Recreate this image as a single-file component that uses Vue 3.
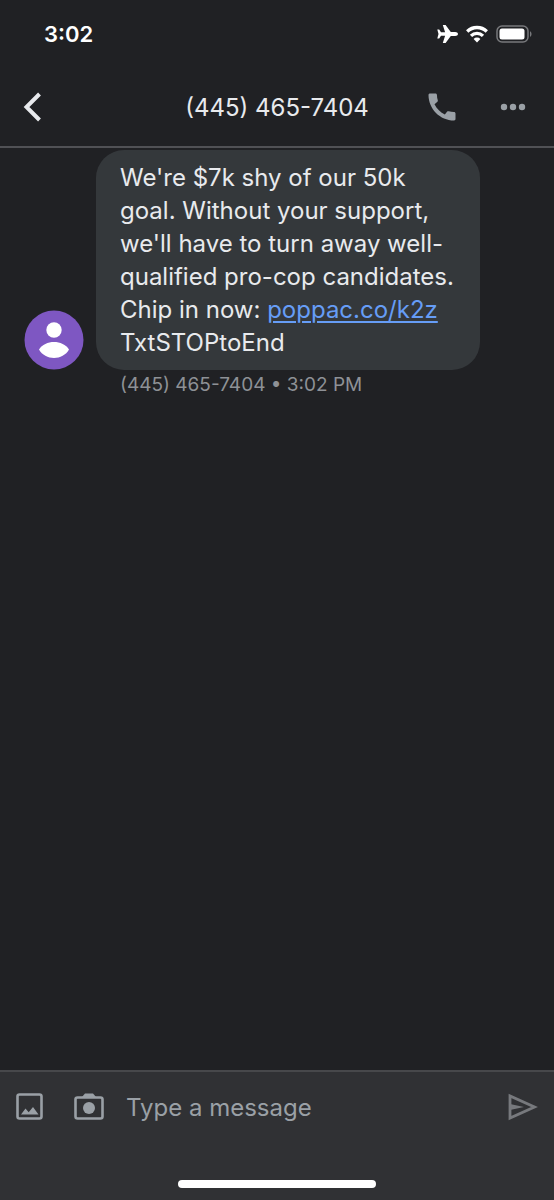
<script setup>
import { ref } from 'vue'

const phone = '(445) 465-7404'
const draft = ref('')
</script>

<template>
  <div class="screen">
    <div class="status">
      <span class="clock">3:02</span>
      <div class="indicators">
        <svg width="22" height="20" viewBox="0 0 22 20" fill="#fff" role="img" aria-label="Airplane mode">
          <path d="M22 10c0-1.200-1.300-2-2.800-2h-4.400L9.600 1H6.800l2.300 7.200H5L3.200 5.600H1.300L2.500 10 1.300 14.400h1.900L5 11.800h4.100L6.800 19h2.800l5.200-7h4.400c1.500 0 2.800-.8 2.800-2z" />
        </svg>
        <svg width="22" height="18" viewBox="0 0 22 18" fill="none" stroke="#fff" stroke-width="3.300" role="img" aria-label="Wi-Fi">
          <path d="M1.200 6.500a14 14 0 0 1 19.600 0" />
          <path d="M5 10.900a8.600 8.600 0 0 1 12 0" />
          <path d="M11 17.400l-3.400-3.400a4.800 4.800 0 0 1 6.800 0z" fill="#fff" stroke="none" />
        </svg>
        <svg width="36" height="18" viewBox="0 0 36 18" role="img" aria-label="Battery">
          <rect x="1" y="1" width="31" height="16" rx="5" fill="none" stroke="#77787b" stroke-width="1.500" />
          <rect x="3.500" y="3.500" width="25" height="11" rx="2.500" fill="#fff" />
          <path d="M34 6.200c2 .8 2 4.800 0 5.600z" fill="#77787b" />
        </svg>
      </div>
    </div>

    <header class="bar">
      <button class="icon-btn back" type="button" aria-label="Back">
        <svg width="20" height="32" viewBox="0 0 20 32" fill="none" stroke="#e8eaed" stroke-width="4">
          <path d="M17.500 3L4.500 16l13 13" />
        </svg>
      </button>
      <h1 class="title">{{ phone }}</h1>
      <button class="icon-btn" type="button" aria-label="Call">
        <svg width="36" height="36" viewBox="0 0 24 24" fill="#9aa0a6">
          <path d="M20.010 15.380c-1.230 0-2.420-.2-3.530-.56-.35-.12-.74-.03-1.010.24l-1.570 1.970c-2.830-1.350-5.480-3.900-6.890-6.830l1.950-1.660c.27-.28.350-.67.240-1.020-.37-1.110-.56-2.300-.56-3.530 0-.54-.45-.99-.99-.99H4.190C3.650 3 3 3.240 3 3.990 3 13.280 10.730 21 20.010 21c.71 0 .99-.63.990-1.180v-3.450c0-.54-.45-.99-.99-.99z" />
        </svg>
      </button>
      <button class="icon-btn more" type="button" aria-label="More options">
        <svg width="26" height="8" viewBox="0 0 26 8" fill="#9aa0a6">
          <circle cx="4" cy="4" r="3.200" /><circle cx="13" cy="4" r="3.200" /><circle cx="22" cy="4" r="3.200" />
        </svg>
      </button>
    </header>

    <main class="thread">
      <div class="message">
        <svg class="avatar" width="60" height="60" viewBox="0 0 60 60" role="img" aria-label="Contact">
          <circle cx="30" cy="30" r="29.500" fill="#7e57c2" />
          <circle cx="30" cy="20" r="7.700" fill="#fff" />
          <path d="M15 39.500c3-5 9-7.500 15-7.500s12 2.500 15 7.500c-3 5.500-9 8.500-15 8.500s-12-3-15-8.500z" fill="#fff" />
        </svg>
        <p class="bubble">We're $7k shy of our 50k goal. Without your support, we'll have to turn away well-qualified pro-cop candidates. Chip in now: <a href="#">poppac.co/k2z</a> TxtSTOPtoEnd</p>
      </div>
      <p class="meta">{{ phone }} • 3:02 PM</p>
    </main>

    <footer class="footer">
      <form class="composer" @submit.prevent>
        <button class="icon-btn" type="button" aria-label="Attach image">
          <svg width="28" height="28" viewBox="0 0 28 28">
            <rect x="1.500" y="1.500" width="24" height="24" rx="2" fill="none" stroke="#9aa0a6" stroke-width="2.600" />
            <path d="M5 21.500l4.500-6 3.200 3.800 4.300-5.300 5.500 7.500z" fill="#9aa0a6" />
          </svg>
        </button>
        <button class="icon-btn" type="button" aria-label="Take photo">
          <svg width="30" height="28" viewBox="0 0 30 28">
            <path d="M8 4l3-3.500h8L22 4z" fill="#9aa0a6" />
            <rect x="1.500" y="4.500" width="27" height="21" rx="2" fill="none" stroke="#9aa0a6" stroke-width="2.600" />
            <circle cx="15" cy="15" r="6" fill="#9aa0a6" />
          </svg>
        </button>
        <input v-model="draft" class="field" type="text" placeholder="Type a message" aria-label="Type a message">
        <button class="icon-btn" type="submit" aria-label="Send">
          <svg width="30" height="28" viewBox="0 0 30 28" fill="none" stroke="#77797d">
            <path d="M2 3v22l24.500-11z" stroke-width="2.800" />
            <path d="M2 11l14 3-14 3z" fill="#77797d" stroke="none" />
          </svg>
        </button>
      </form>
      <div class="home"></div>
    </footer>
  </div>
</template>

<style>
body {
  background: #202124;
}
</style>

<style scoped>
.screen {
  display: flex;
  flex-direction: column;
  min-height: 100vh;
  background: #202124;
  color: #e8eaed;
  font-family: Inter, "Liberation Sans", sans-serif;
}
.status {
  display: flex;
  align-items: center;
  justify-content: space-between;
  height: 68px;
  padding: 0 22px 0 44px;
}
.clock {
  color: #fff;
  font-size: 22px;
  font-weight: 600;
}
.indicators {
  display: flex;
  align-items: center;
  gap: 8px;
}
.icon-btn {
  display: flex;
  flex: none;
  padding: 0;
  border: 0;
  background: none;
  cursor: pointer;
}
.bar {
  display: flex;
  align-items: center;
  height: 78px;
  padding: 0 28px 0 22px;
  border-bottom: 2px solid #505155;
}
.title {
  flex: 1;
  margin: 0;
  padding-left: 92px;
  text-align: center;
  font-size: 24px;
  font-weight: 400;
}
.more {
  margin-left: 40px;
}
.title + .icon-btn {
  margin-left: 4px;
}
.thread {
  flex: 1;
  padding: 2px 24px;
}
.message {
  display: flex;
  align-items: flex-end;
  gap: 12px;
}
.avatar {
  flex: none;
}
.bubble {
  max-width: 384px;
  box-sizing: border-box;
  margin: 0;
  padding: 11px 24px;
  border-radius: 28px;
  background: #34383b;
  font-size: 24px;
  line-height: 33px;
}
.bubble a {
  color: #669df6;
  text-decoration-thickness: 2px;
  text-underline-offset: 3px;
}
.meta {
  margin: 0 0 0 96px;
  color: #8e9196;
  font-size: 19px;
  line-height: 30px;
}
.footer {
  display: flex;
  flex-direction: column;
  justify-content: space-between;
  align-items: center;
  min-height: 130px;
  box-sizing: border-box;
  padding: 12px 16px;
  border-top: 2px solid #47484b;
  background: #303134;
}
.composer {
  display: flex;
  align-items: center;
  gap: 30px;
  width: 100%;
}
.field {
  flex: 1;
  min-width: 0;
  height: 46px;
  margin-left: -8px;
  padding: 0;
  border: 0;
  outline: 0;
  background: none;
  color: #e8eaed;
  font: inherit;
  font-size: 24px;
}
.field::placeholder {
  color: #9aa0a6;
  opacity: 1;
}
.home {
  width: 38%;
  height: 8px;
  border-radius: 4px;
  background: #fff;
}
</style>
